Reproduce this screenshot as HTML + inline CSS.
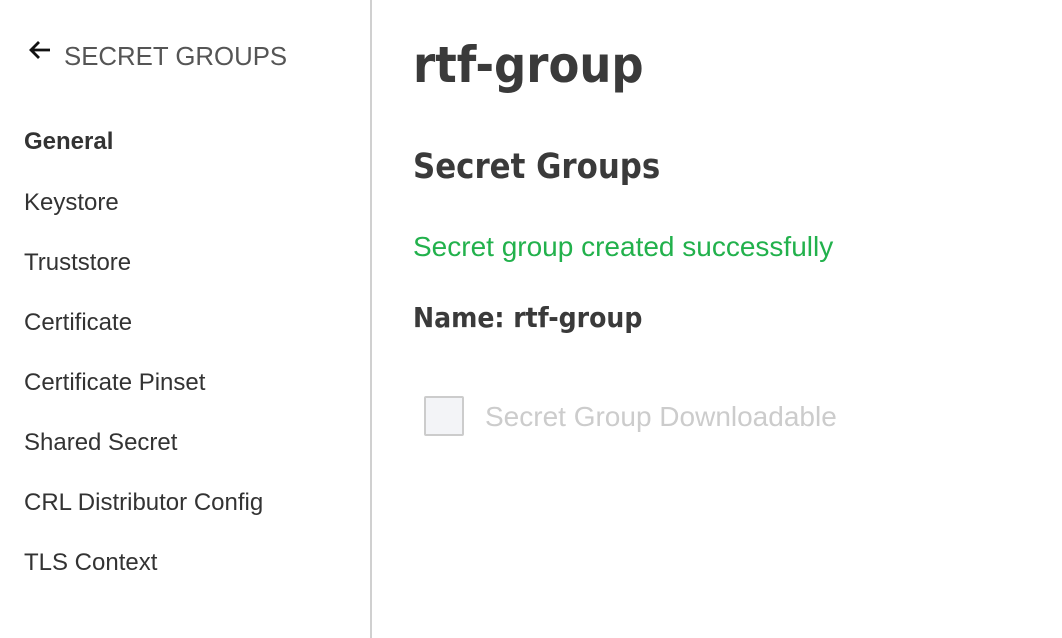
<!DOCTYPE html>
<html><head><style>
body{margin:0;width:1062px;height:638px;background:#fff;font-family:"Liberation Sans",sans-serif;position:relative;overflow:hidden;color:#333}
.a{position:absolute;white-space:nowrap}
.nav{font-size:24px;color:#333}
.h{font-family:"DejaVu Sans Condensed","DejaVu Sans",sans-serif;font-weight:bold;color:#3a3a3a}
</style></head><body>
<div class="a" style="left:370px;top:0;width:2px;height:638px;background:#d0d0d0"></div>
<svg class="a" style="left:28px;top:40px" width="24" height="20" viewBox="0 0 24 20"><path d="M22 10H3M11 2L3 10l8 8" stroke="#111" stroke-width="2.8" fill="none"/></svg>
<div class="a" style="left:64px;top:43px;font-size:25.8px;color:#555">SECRET GROUPS</div>
<div class="a nav" style="left:24px;top:128px;font-weight:bold;font-size:24px">General</div>
<div class="a nav" style="left:24px;top:189px">Keystore</div>
<div class="a nav" style="left:24px;top:249px">Truststore</div>
<div class="a nav" style="left:24px;top:309px">Certificate</div>
<div class="a nav" style="left:24px;top:369px">Certificate Pinset</div>
<div class="a nav" style="left:24px;top:429px">Shared Secret</div>
<div class="a nav" style="left:24px;top:489px">CRL Distributor Config</div>
<div class="a nav" style="left:24px;top:549px">TLS Context</div>
<div class="a h" style="left:413px;top:36px;font-size:50px">rtf-group</div>
<div class="a h" style="left:413px;top:147px;font-size:34.3px">Secret Groups</div>
<div class="a" style="left:413px;top:231px;font-size:28px;color:#22b14c">Secret group created successfully</div>
<div class="a h" style="left:413px;top:301px;font-size:28px">Name: rtf-group</div>
<div class="a" style="left:424px;top:396px;width:36px;height:36px;border:2px solid #ccc;background:#f3f4f7;border-radius:2px"></div>
<div class="a" style="left:485px;top:401px;font-size:28px;color:#ccc">Secret Group Downloadable</div>
</body></html>
